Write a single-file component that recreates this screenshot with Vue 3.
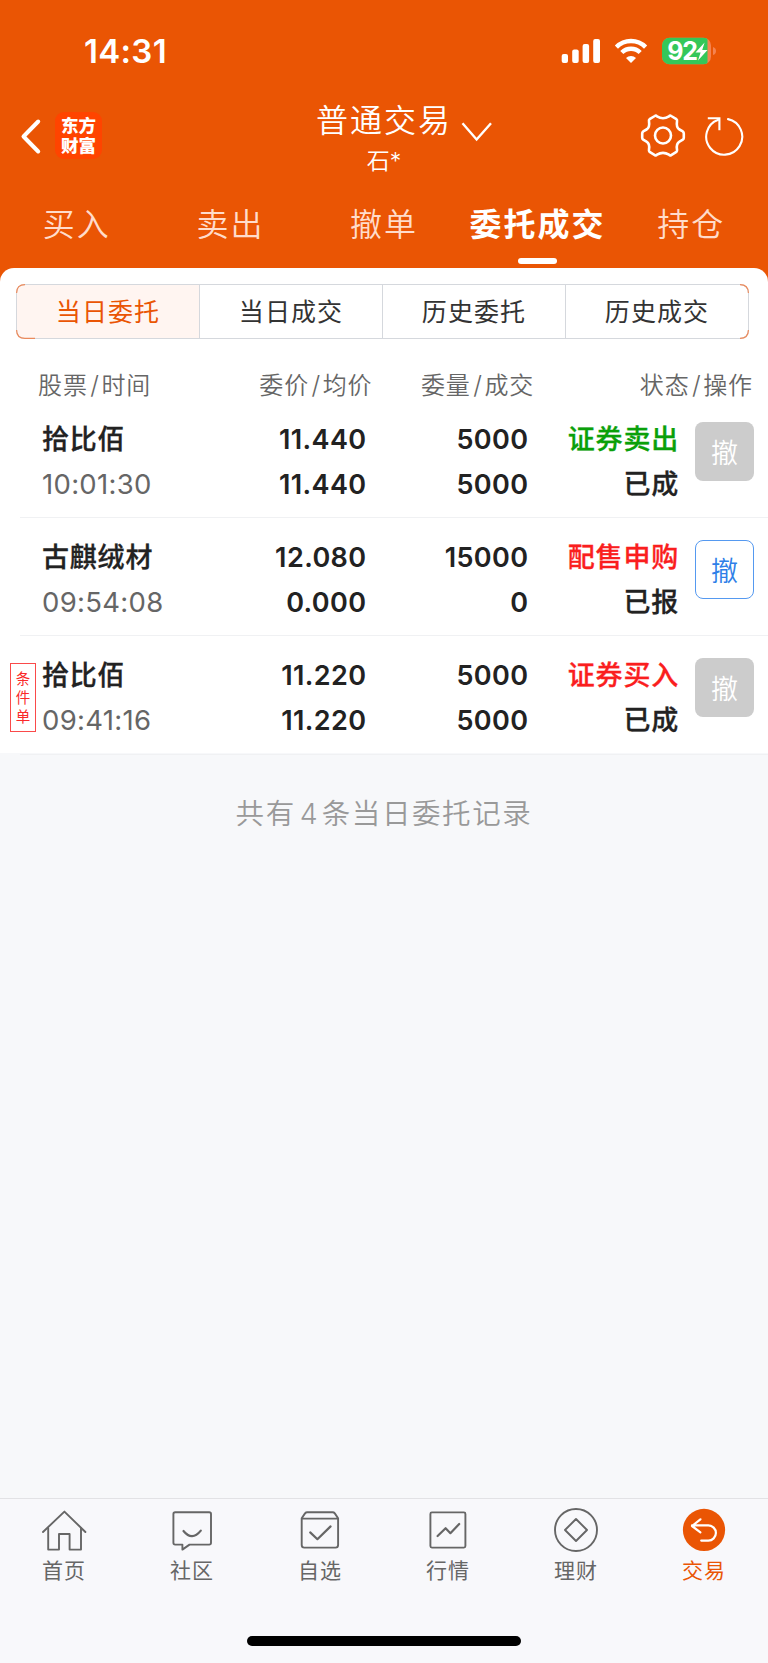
<script setup>
const tabs = ['买入', '卖出', '撤单', '委托成交', '持仓']
const segments = ['当日委托', '当日成交', '历史委托', '历史成交']
const orders = [
  { name: '拾比佰', time: '10:01:30', price: '11.440', avg: '11.440', qty: '5000', done: '5000', type: '证券卖出', tone: 'green', status: '已成', active: false },
  { name: '古麒绒材', time: '09:54:08', price: '12.080', avg: '0.000', qty: '15000', done: '0', type: '配售申购', tone: 'red', status: '已报', active: true },
  { name: '拾比佰', time: '09:41:16', price: '11.220', avg: '11.220', qty: '5000', done: '5000', type: '证券买入', tone: 'red', status: '已成', active: false, tag: ['条', '件', '单'] },
]
const nav = [
  { id: 'home', label: '首页' },
  { id: 'community', label: '社区' },
  { id: 'watch', label: '自选' },
  { id: 'market', label: '行情' },
  { id: 'wealth', label: '理财' },
  { id: 'trade', label: '交易' },
]
</script>

<template>
  <div class="app">
    <header class="top">
      <div class="statusbar">
        <span class="clock">14:31</span>
        <svg class="signals" width="160" height="30" viewBox="0 0 160 30">
          <g fill="#fff">
            <rect x="1.7" y="17" width="6.3" height="9" rx="2" />
            <rect x="12.2" y="12.5" width="6.5" height="13.5" rx="2" />
            <rect x="22.6" y="7" width="6.5" height="19" rx="2" />
            <rect x="33.2" y="2" width="6.8" height="24" rx="2" />
          </g>
          <g fill="none" stroke="#fff" stroke-width="4.4">
            <path d="M56.4 10.1 A20.5 20.5 0 0 1 85.6 10.1" />
            <path d="M61.8 15.5 A13 13 0 0 1 80.2 15.5" />
          </g>
          <path d="M71 26 L66 20.9 A7.2 7.2 0 0 1 76 20.9 Z" fill="#fff" />
          <clipPath id="cell"><rect x="102" y="0.7" width="49" height="26.6" rx="7.5" /></clipPath>
          <g clip-path="url(#cell)">
            <rect x="102" y="0" width="49" height="28" fill="#f58350" />
            <rect x="102" y="0" width="45.5" height="28" fill="#34c759" />
          </g>
          <path d="M153 10 Q156 11 156 14 Q156 17 153 18 Z" fill="#f58350" />
          <text x="107.2" y="22.8" class="charge">92</text>
          <path d="M144.6 5.5 L135.5 15.4 H140.6 L138 23.5 L147.5 13 H142.2 Z" fill="#fff" />
        </svg>
      </div>

      <div class="titlebar">
        <div class="side left">
          <svg width="24" height="40" viewBox="0 0 24 40"><path d="M18.2 4.5 L3.5 19.5 L18.2 34.5" fill="none" stroke="#fff" stroke-width="4" stroke-linecap="round" stroke-linejoin="round" /></svg>
          <div class="logo"><span>东方</span><span>财富</span></div>
        </div>
        <div class="heading">
          <div class="title">普通交易</div>
          <div class="account">石*</div>
        </div>
        <svg class="caret" width="32" height="22" viewBox="0 0 32 22"><path d="M1.5 2.2 L15.6 18.5 L30 2.2" fill="none" stroke="#fff" stroke-width="2.4" /></svg>
        <div class="side right">
          <svg width="46" height="46" viewBox="0 0 46 46" fill="none" stroke="#fff" stroke-width="2.6" stroke-linejoin="round">
            <path d="M14.8 3 Q16 2.2 17 3.4 Q23 7 29 3.4 Q30 2.2 31.2 3 L36.4 6.2 Q37.4 7 37 8.5 Q36 14.5 39.5 16.5 L42.8 18.4 Q43.8 19.2 43.8 20.4 V24.8 Q43.8 26 42.8 26.7 L39.5 28.6 Q36 30.6 37 36.6 Q37.4 38.1 36.4 38.9 L31.2 42.1 Q30 42.9 29 41.7 Q23 38.1 17 41.7 Q16 42.9 14.8 42.1 L9.6 38.9 Q8.6 38.1 9 36.6 Q10 30.6 6.5 28.6 L3.2 26.7 Q2.2 26 2.2 24.8 V20.4 Q2.2 19.2 3.2 18.4 L6.5 16.5 Q10 14.5 9 8.5 Q8.6 7 9.6 6.2 Z" />
            <circle cx="23" cy="22.5" r="8" />
          </svg>
          <svg width="42" height="42" viewBox="0 0 42 42" fill="none" stroke="#fff" stroke-width="2.1">
            <path d="M25 3.1 A18 18 0 1 1 15.3 3.7" stroke-linecap="round" />
            <path d="M4.8 2.2 H16.4 V14.2" />
          </svg>
        </div>
      </div>

      <nav class="tabs">
        <div v-for="tab in tabs" :key="tab" class="tab" :class="{ on: tab === '委托成交' }"><span>{{ tab }}</span></div>
      </nav>
    </header>

    <main class="panel">
      <div class="segments">
        <div v-for="(s, i) in segments" :key="s" class="segment" :class="{ on: i === 0 }"><span>{{ s }}</span></div>
        <svg class="corners" width="733" height="55" viewBox="0 0 733 55" fill="none" stroke="#ea8a5c" stroke-width="1.2">
          <path d="M0.6 9 Q0.6 0.6 9 0.6 M0.6 46 Q0.6 54.4 9 54.4 H19 M724 0.6 Q732.4 0.6 732.4 9 M724 54.4 Q732.4 54.4 732.4 46" />
        </svg>
      </div>
      <div class="cols head">
        <span>股票<i>/</i>时间</span>
        <span>委价<i>/</i>均价</span>
        <span>委量<i>/</i>成交</span>
        <span>状态<i>/</i>操作</span>
      </div>
      <div v-for="o in orders" :key="o.time" class="order">
        <div class="stock"><b>{{ o.name }}</b><span class="time">{{ o.time }}</span></div>
        <div class="num price"><span>{{ o.price }}</span><span>{{ o.avg }}</span></div>
        <div class="num qty"><span>{{ o.qty }}</span><span>{{ o.done }}</span></div>
        <div class="state"><b :class="o.tone">{{ o.type }}</b><b>{{ o.status }}</b></div>
        <button class="cancel" :class="{ active: o.active }">撤</button>
        <div v-if="o.tag" class="tag"><span v-for="c in o.tag" :key="c">{{ c }}</span></div>
      </div>
    </main>

    <p class="summary">共有<i>4</i>条当日委托记录</p>

    <footer class="bottom">
      <div class="nav">
        <div v-for="n in nav" :key="n.id" class="item" :class="{ on: n.id === 'trade' }">
          <svg width="48" height="48" viewBox="0 0 48 48" fill="none" stroke="#666" stroke-width="1.9" stroke-linejoin="round" stroke-linecap="round">
            <template v-if="n.id === 'home'">
              <path d="M3 25 L24.4 4.6 L45.4 25" />
              <path d="M8.2 21 V42.6 H19 V27 H29.6 V42.6 H41 V21" />
            </template>
            <template v-else-if="n.id === 'community'">
              <path d="M7.2 5.3 H41.2 Q43 5.3 43 7.1 V35.8 Q43 37.6 41.2 37.6 H21.5 L14.4 42.6 V37.6 H7.2 Q5.4 37.6 5.4 35.8 V7.1 Q5.4 5.3 7.2 5.3 Z" />
              <path d="M15.5 24 Q24 34.5 32.8 23.6" stroke-width="2.2" />
            </template>
            <template v-else-if="n.id === 'watch'">
              <path d="M11.2 5.3 H36.6 Q37.9 5.3 38.8 6.4 L42.1 11.2 V38 Q42.1 40.6 39.5 40.6 H8.3 Q5.7 40.6 5.7 38 V11.2 L9 6.4 Q9.9 5.3 11.2 5.3 Z M5.7 11.6 H42.1" />
              <path d="M14.2 25.4 L21.4 32.2 L34.6 19.4" stroke-width="2.2" />
            </template>
            <template v-else-if="n.id === 'market'">
              <rect x="6.4" y="5.4" width="35" height="35.2" rx="1.5" />
              <path d="M13.6 29 L21.6 21.2 L26.4 26.2 L35.2 17" stroke-width="2.2" />
            </template>
            <template v-else-if="n.id === 'wealth'">
              <circle cx="24" cy="23" r="21" />
              <path d="M24 12 L35 23 L24 34 L13 23 Z" />
            </template>
            <template v-else>
              <circle cx="24" cy="22.9" r="21.1" fill="#ea5504" stroke="none" />
              <path d="M20.4 12.3 L12 19 L20.4 25.3 M12 18.4 H28.3 A7.6 7.6 0 0 1 28.3 33.6 H21.2" stroke="#fff" stroke-width="2.2" />
            </template>
          </svg>
          <span>{{ n.label }}</span>
        </div>
      </div>
      <div class="homebar"></div>
    </footer>
  </div>
</template>

<style>
body { margin: 0; background: #f7f8fa; }
</style>

<style scoped>
* { box-sizing: border-box; }
.app {
  width: 768px; height: 1663px; display: flex; flex-direction: column; overflow: hidden;
  background: linear-gradient(#ea5504 0 300px, #f7f8fa 300px);
  font-family: Inter, "Noto Sans CJK SC", sans-serif; white-space: nowrap;
}
i { font-style: normal; }
.top { height: 268px; color: #fff; flex: none; }
.statusbar { height: 96px; display: flex; justify-content: space-between; padding: 37px 48px 0 84px; }
.clock { font-size: 33px; font-weight: 600; line-height: 28px; letter-spacing: 0.3px; }
.charge { font: 700 25px Inter, sans-serif; fill: #fff; letter-spacing: -1.2px; }
.titlebar { height: 92px; position: relative; display: flex; justify-content: space-between; align-items: flex-start; padding: 16px 23px 0 20px; }
.side { display: flex; }
.left { gap: 11px; }
.left svg { margin-top: 5px; }
.logo {
  width: 47px; height: 47px; border-radius: 9px; background: #ff4400; display: flex; flex-direction: column;
  align-items: center; padding-top: 4px; font-weight: 900; font-size: 17.5px; line-height: 19.5px;
}
.right { gap: 17px; padding-top: 1px; }
.right svg:last-child { margin-top: 3px; }
.heading { position: absolute; left: 0; right: 0; top: 1px; text-align: center; font-weight: 350; }
.title { font-size: 32px; line-height: 48px; letter-spacing: 2px; }
.account { font-size: 23px; line-height: 33px; }
.caret { position: absolute; left: 461px; top: 25px; }
.tabs { display: grid; grid-template-columns: repeat(5, 1fr); height: 80px; }
.tab { position: relative; text-align: center; font-size: 32px; line-height: 48px; padding-top: 13px; letter-spacing: 2px; font-weight: 350; color: #ffdccb; }
.tab.on { font-weight: 700; color: #fff; }
.tab.on::after { content: ""; position: absolute; left: 57px; top: 70px; width: 39px; height: 6px; border-radius: 3px; background: #fff; }
.panel { flex: none; background: #fff; border-radius: 14px 14px 0 0; padding-top: 16px; height: 485px; }
.segments { margin: 0 19px 0 16px; height: 55px; display: grid; grid-template-columns: 183px 183px 183px 1fr; border: 1px solid #d5d8dd; border-radius: 9px; position: relative; }
.corners { position: absolute; left: -1px; top: -1px; }
.segment { text-align: center; font-size: 25px; line-height: 55px; height: 53px; letter-spacing: 1.1px; color: #333; font-weight: 400; }
.segment { border-right: 1px solid #d5d8dd; }
.segment:nth-child(4) { border-right: 0; }
.segment.on { background: #fff5f1; color: #ea5504; border-radius: 8px 0 0 8px; }
.head { display: flex; font-weight: 350; color: #666; font-size: 24px; letter-spacing: 0.9px; line-height: 36px; padding: 28px 15px 0 38px; height: 60px; }
.head i { margin: 0 1.5px 0 2.5px; font-size: 25px; }
.head span:nth-child(2) { margin-left: 108px; }
.head span:nth-child(3) { margin-left: 48.5px; }
.head span:nth-child(4) { margin-left: auto; }
.order { position: relative; height: 118.2px; display: flex; padding-top: 17px; }
.order::after { content: ""; position: absolute; left: 20px; right: 0; bottom: -1px; height: 1px; background: #f0f1f3; }
.stock, .num, .state { display: flex; flex-direction: column; font-size: 27px; line-height: 45px; color: #222; padding-top: 1px; }
.stock { width: 180px; padding-left: 42px; }
.stock b, .state b { font-weight: 500; letter-spacing: 0.8px; -webkit-text-stroke: 0.3px; }
.time { font-size: 27.5px; font-weight: 370; color: #666; letter-spacing: 0.3px; }
.num { text-align: right; font-weight: 600; letter-spacing: 0.4px; }
.price { width: 186.5px; }
.qty { width: 162px; }
.state { width: 150.5px; text-align: right; }
.state .green { color: #0aa00a; }
.state .red { color: #fa1e1e; }
.cancel {
  width: 59px; height: 59px; margin: 6px 0 0 16px; padding: 0; border: 0; border-radius: 8px;
  background: #ccc; color: #fff; font: 350 27px/57px "Noto Sans CJK SC", sans-serif;
}
.cancel.active { background: #fff; border: 1.5px solid #5599f0; color: #2f7fe8; line-height: 55px; }
.tag {
  position: absolute; left: 10px; top: 28px; width: 26px; height: 69px; border: 1px solid #fa4a4a;
  display: flex; flex-direction: column; align-items: center; padding-top: 5px;
  color: #fa2a2a; font-size: 14.5px; line-height: 19px;
}
.summary { margin: 0; padding-top: 40px; height: 745px; text-align: center; color: #999; font-size: 28.5px; font-weight: 350; line-height: 42px; letter-spacing: 1.6px; }
.summary i { margin: 0 4px; letter-spacing: 0; }
.bottom { flex: none; height: 165px; border-top: 1px solid #e2e2e5; background: #f8f8fb; }
.nav { display: grid; grid-template-columns: repeat(6, 1fr); height: 137px; padding-top: 8px; }
.item { display: flex; flex-direction: column; align-items: center; color: #666; font-size: 21px; line-height: 32px; letter-spacing: 1px; }
.item.on { color: #ea5504; }
.homebar { width: 274px; height: 10px; border-radius: 5px; background: #000; margin: 0 auto; }
</style>
